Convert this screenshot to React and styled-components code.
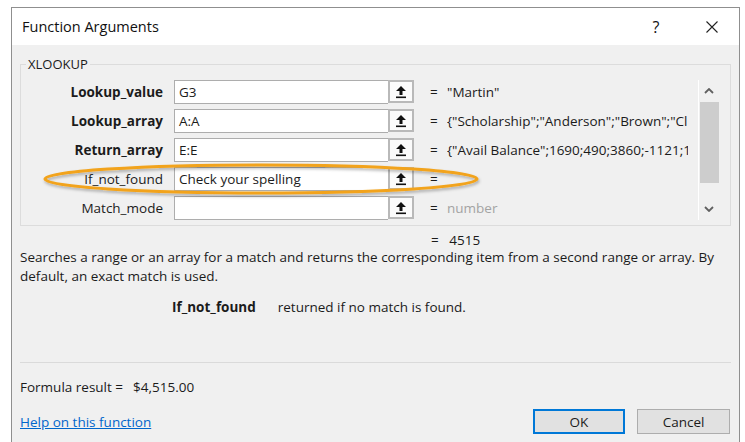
import React from "react";
import styled, { createGlobalStyle } from "styled-components";

const GlobalStyle = createGlobalStyle`
  html, body {
    margin: 0;
    background: #ffffff;
    overflow: hidden;
  }
  body {
    font-family: "Open Sans", "Noto Sans", sans-serif;
    color: #1b1b1b;
  }
`;

const Page = styled.div`
  padding: 7px 5px 0 11px;
`;

const Window = styled.div`
  position: relative;
  width: 727px;
  height: 440px;
  border: 1px solid #8f8f8f;
  border-bottom: none;
  background: #f0f0f0;
  display: flex;
  flex-direction: column;
`;

const TitleBar = styled.div`
  height: 37px;
  background: #ffffff;
  display: flex;
  align-items: center;
  padding-left: 10px;
  font-size: 14.5px;
  color: #111;
`;

const TitleButtons = styled.div`
  margin-left: auto;
  display: flex;
  align-items: center;
`;

const HelpMark = styled.span`
  width: 20px;
  text-align: center;
  font-size: 16px;
  margin-right: 40px;
`;

const CloseMark = styled.span`
  display: flex;
  margin-right: 21px;
`;

const Body = styled.div`
  position: relative;
  flex: 1;
  padding: 0 8px;
  font-size: 13.5px;
`;

const GroupBox = styled.fieldset`
  margin: 11px 0 0 0;
  padding: 0;
  border: 1px solid #dcdcdc;
  height: 170px;
  box-sizing: border-box;
`;

const Legend = styled.legend`
  margin-left: 5px;
  padding: 0 2px;
  font-size: 13px;
  line-height: 16px;
`;

const GroupInner = styled.div`
  display: flex;
  padding-top: 8px;
`;

const Rows = styled.div`
  flex: 1;
  display: grid;
  grid-template-columns: 153px 214px 26px 33px 241px;
  grid-auto-rows: 24px;
  row-gap: 5px;
`;

const Label = styled.div`
  display: flex;
  align-items: center;
  justify-content: flex-end;
  padding-right: 11px;
  font-weight: ${(p) => (p.$bold ? 700 : 400)};
  white-space: nowrap;
`;

const Field = styled.div`
  display: flex;
  align-items: center;
  box-sizing: border-box;
  background: #ffffff;
  border: 1px solid #adadad;
  border-right: none;
  padding-left: 4px;
  white-space: nowrap;
`;

const RefButton = styled.div`
  display: flex;
  align-items: center;
  justify-content: center;
  box-sizing: border-box;
  height: 23px;
  background: #fbfbfb;
  border: 2px solid #b9b9b9;
`;

const Equals = styled.div`
  display: flex;
  align-items: center;
  padding-left: 16px;
`;

const Value = styled.div`
  display: flex;
  align-items: center;
  overflow: hidden;
  white-space: nowrap;
  color: ${(p) => (p.$muted ? "#a3a3a3" : "#1b1b1b")};
`;

const ScrollBar = styled.div`
  width: 20px;
  height: 140px;
  margin: 0 11px 0 0;
  border-left: 1px solid #ffffff;
  display: flex;
  flex-direction: column;
  align-items: center;
`;

const ScrollArrow = styled.div`
  height: 22px;
  display: flex;
  align-items: center;
  justify-content: center;
`;

const ScrollThumb = styled.div`
  width: 19px;
  height: 81px;
  background: #cdcdcd;
`;

const ResultRow = styled.div`
  margin-top: 6px;
  padding-left: 411px;
  height: 16px;
  line-height: 16px;
`;

const Description = styled.p`
  margin: 0;
  line-height: 19px;
  padding-right: 4px;
`;

const ArgHelp = styled.div`
  margin-top: 12px;
  padding-left: 152px;
  line-height: 18px;

  b {
    margin-right: 22px;
  }
`;

const Divider = styled.div`
  margin: 46px 0 0 0;
  border-top: 1px solid #dadada;
`;

const FormulaResult = styled.div`
  margin-top: 15px;
  line-height: 18px;

  span {
    margin-left: 10px;
  }
`;

const Footer = styled.div`
  display: flex;
  align-items: center;
  margin-top: 13px;
`;

const HelpLink = styled.a`
  color: #0066cc;
  text-decoration: underline;
  cursor: pointer;
`;

const Buttons = styled.div`
  margin-left: auto;
  display: flex;
  gap: 12px;
  margin-right: 1px;
`;

const Button = styled.button`
  box-sizing: border-box;
  width: ${(p) => (p.$primary ? 92 : 93)}px;
  height: 25px;
  font-family: inherit;
  font-size: 13.5px;
  color: #1b1b1b;
  background: #e1e1e1;
  border: ${(p) => (p.$primary ? "2px solid #0078d7" : "1px solid #adadad")};
  padding: 0;
`;

const Highlight = styled.svg`
  position: absolute;
  left: 25px;
  top: 113px;
  overflow: visible;
  pointer-events: none;
`;

const RefIcon = () => (
  <svg width="12" height="14" viewBox="0 0 12 14">
    <path d="M6 1 L11 6 L7.5 6 L7.5 10 L4.5 10 L4.5 6 L1 6 Z" fill="#111" />
    <rect x="1" y="11.5" width="10" height="1.6" fill="#111" />
  </svg>
);

const Chevron = ({ down }) => (
  <svg width="10" height="6" viewBox="0 0 10 6">
    <path
      d={down ? "M1 1 L5 5 L9 1" : "M1 5 L5 1 L9 5"}
      fill="none"
      stroke="#606060"
      strokeWidth="1.8"
    />
  </svg>
);

const args = [
  { name: "Lookup_value", bold: true, input: "G3", value: '"Martin"' },
  { name: "Lookup_array", bold: true, input: "A:A", value: '{"Scholarship";"Anderson";"Brown";"Cl' },
  { name: "Return_array", bold: true, input: "E:E", value: '{"Avail Balance";1690;490;3860;-1121;1' },
  { name: "If_not_found", bold: false, input: "Check your spelling", value: "" },
  { name: "Match_mode", bold: false, input: "", value: "number", muted: true },
];

export default function App() {
  return (
    <Page>
      <GlobalStyle />
      <Window>
        <TitleBar>
          Function Arguments
          <TitleButtons>
            <HelpMark>?</HelpMark>
            <CloseMark>
              <svg width="12" height="12" viewBox="0 0 12 12">
                <path d="M0.5 0.5 L11.5 11.5 M11.5 0.5 L0.5 11.5" stroke="#222" strokeWidth="1.1" />
              </svg>
            </CloseMark>
          </TitleButtons>
        </TitleBar>
        <Body>
          <GroupBox>
            <Legend>XLOOKUP</Legend>
            <GroupInner>
              <Rows>
                {args.map((a) => (
                  <React.Fragment key={a.name}>
                    <Label $bold={a.bold}>{a.name}</Label>
                    <Field>{a.input}</Field>
                    <RefButton>
                      <RefIcon />
                    </RefButton>
                    <Equals>=</Equals>
                    <Value $muted={a.muted}>{a.value}</Value>
                  </React.Fragment>
                ))}
              </Rows>
              <ScrollBar>
                <ScrollArrow>
                  <Chevron />
                </ScrollArrow>
                <ScrollThumb />
                <ScrollArrow style={{ marginTop: "auto" }}>
                  <Chevron down />
                </ScrollArrow>
              </ScrollBar>
            </GroupInner>
          </GroupBox>

          <ResultRow>=&nbsp;&nbsp;&nbsp;4515</ResultRow>
          <Description>
            Searches a range or an array for a match and returns the corresponding item from a second range or array. By
            default, an exact match is used.
          </Description>
          <ArgHelp>
            <b>If_not_found</b>returned if no match is found.
          </ArgHelp>

          <Divider />
          <FormulaResult>
            Formula result =<span>$4,515.00</span>
          </FormulaResult>
          <Footer>
            <HelpLink>Help on this function</HelpLink>
            <Buttons>
              <Button $primary>OK</Button>
              <Button>Cancel</Button>
            </Buttons>
          </Footer>

          <Highlight width="440" height="40" viewBox="0 0 440 40">
            <defs>
              <filter id="ringShadow" x="-10%" y="-50%" width="120%" height="200%">
                <feDropShadow dx="1" dy="2" stdDeviation="1.8" floodColor="#000" floodOpacity="0.3" />
              </filter>
            </defs>
            <ellipse
              cx="224"
              cy="21"
              rx="216"
              ry="14"
              fill="none"
              stroke="#f2a31b"
              strokeWidth="3"
              filter="url(#ringShadow)"
            />
          </Highlight>
        </Body>
      </Window>
    </Page>
  );
}
